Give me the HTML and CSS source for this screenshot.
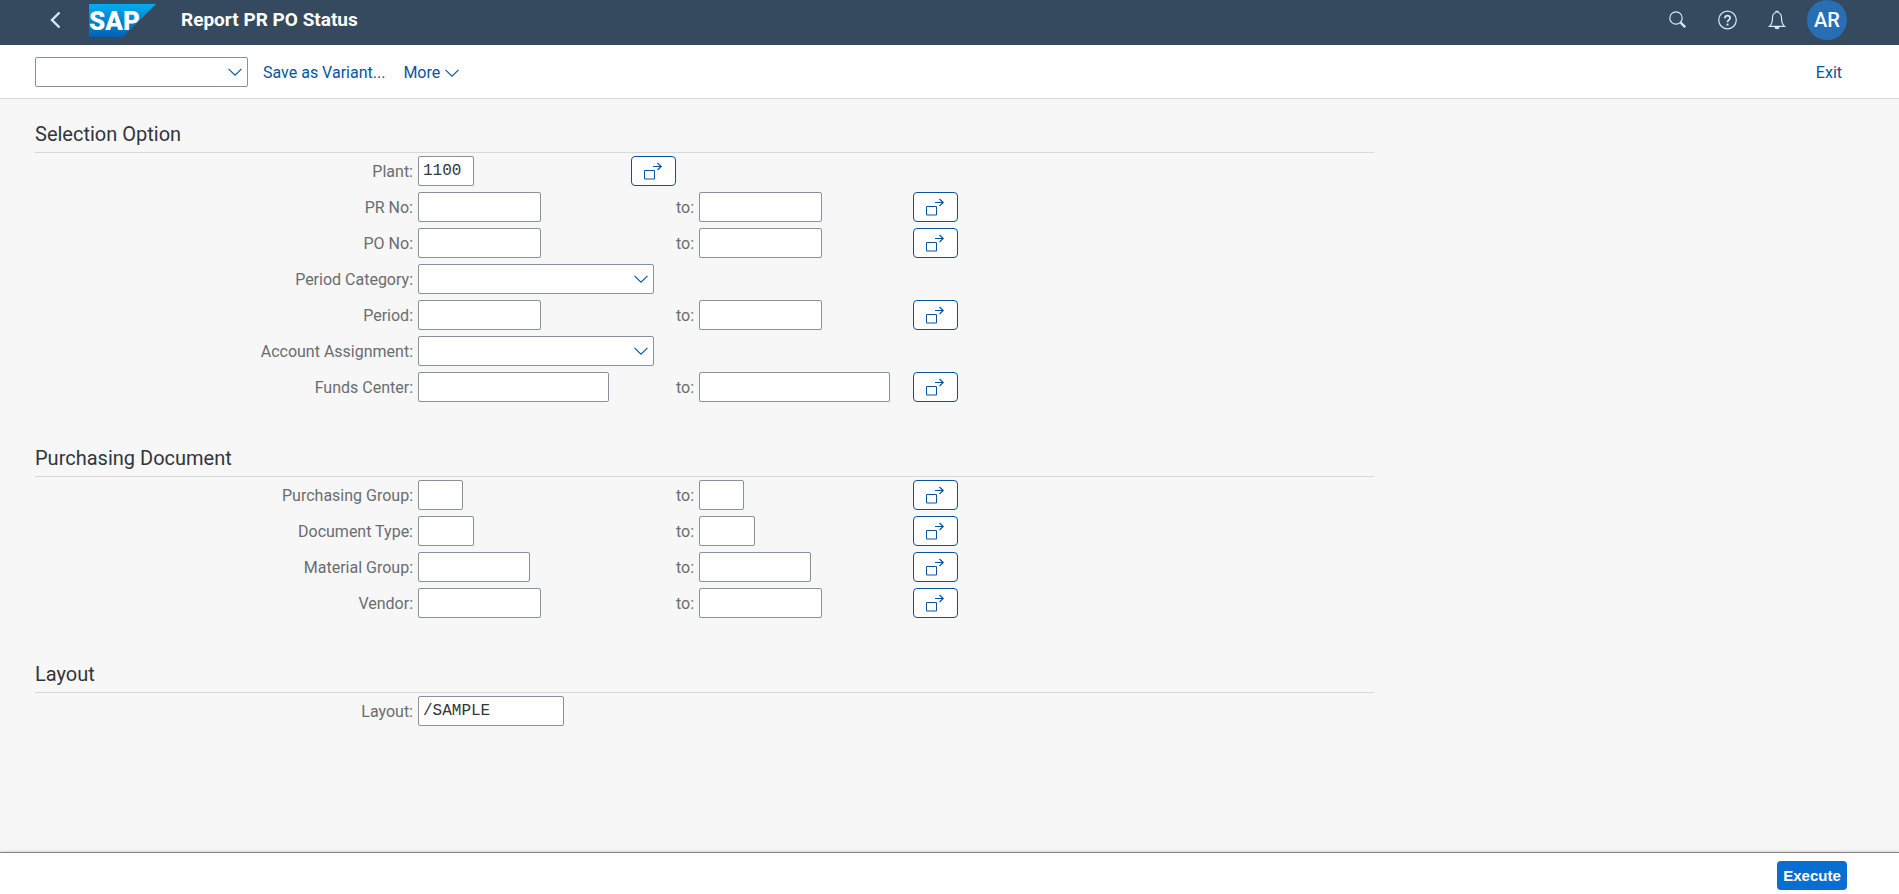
FILE: index.html
```html
<!DOCTYPE html>
<html lang="en">
<head>
<meta charset="utf-8">
<title>Report PR PO Status</title>
<link rel="stylesheet" href="styles.css">
</head>
<body>
<svg class="sprite" aria-hidden="true">
  <symbol id="chevron" viewBox="0 0 14 8"><path d="M.5.8 7 7.200 13.500.8" fill="none" stroke="currentColor" stroke-width="1.100"/></symbol>
  <symbol id="select-more" viewBox="0 0 19 18">
    <path d="M.5 8.500h10v8.500H.5z" fill="none" stroke="currentColor"/>
    <path d="M9 4.500h8.500M13.500 1l3.700 3.500L13.500 8" fill="none" stroke="currentColor" stroke-width="1.200"/>
  </symbol>
</svg>

<header class="shell">
  <button class="shell-button back" aria-label="Back"><svg width="11" height="18" viewBox="0 0 11 18"><path d="M9.500 1.500 2 9l7.500 7.500" fill="none" stroke="currentColor" stroke-width="2.400"/></svg></button>
  <a class="logo" href="#" aria-label="SAP home">
    <svg width="67" height="33" viewBox="0 0 67 33">
      <defs><linearGradient id="sap" x1="0" y1="0" x2="0" y2="1"><stop offset="0" stop-color="#00aeef"/><stop offset=".5" stop-color="#0083cf"/><stop offset="1" stop-color="#0062b4"/></linearGradient></defs>
      <path d="M0 0h67L34 33H0z" fill="url(#sap)"/>
      <text class="logo-text" x="0" y="26">SAP</text>
    </svg>
  </a>
  <h1 class="shell-title">Report PR PO Status</h1>
  <div class="shell-actions">
    <button class="shell-button" aria-label="Search"><svg width="18" height="18" viewBox="0 0 18 18" fill="none" stroke="currentColor"><circle cx="8" cy="7" r="6.200" stroke-width="1.200"/><path d="m12.500 11.500 4.700 4.700" stroke-width="2.400"/></svg></button>
    <button class="shell-button" aria-label="Help"><svg width="20" height="20" viewBox="0 0 20 20" fill="none" stroke="currentColor"><circle cx="10.500" cy="10" r="8.800" stroke-width="1.200"/><path d="M7.900 8.200c0-3.500 5.200-3.300 5.200-.3 0 1.900-2.600 2-2.600 4.300" stroke-width="1.800"/><path d="M10.500 13.600v2" stroke-width="2"/></svg></button>
    <button class="shell-button" aria-label="Notifications"><svg width="18" height="20" viewBox="0 0 18 20" fill="none" stroke="currentColor"><path d="M1.500 16.400h15c-2.500-2-3-4-3-8.400 0-3-1.500-5-3.500-5.500V1.300H8v1.200C6 3 4.500 5 4.500 8c0 4.400-.5 6.400-3 8.400z" stroke-width="1.200"/><path d="M6.500 17h5a2.500 2.300 0 0 1-5 0z" fill="currentColor" stroke="none"/></svg></button>
    <button class="avatar" aria-label="User menu">AR</button>
  </div>
</header>

<nav class="toolbar">
  <div class="combo combo-variant"><select class="field" aria-label="Variant"><option></option></select><svg class="chevron"><use href="#chevron"/></svg></div>
  <button class="link-button">Save as Variant...</button>
  <button class="link-button more">More <svg class="chevron"><use href="#chevron"/></svg></button>
  <button class="link-button exit">Exit</button>
</nav>

<main class="content">
  <section class="group">
    <h2 class="group-title">Selection Option</h2>
    <div class="rows">
      <div class="row"><label for="plant">Plant:</label><div class="single"><input class="field w-4" id="plant" value="1100"><button class="multi" aria-label="Multiple selection for Plant"><svg><use href="#select-more"/></svg></button></div></div>
      <div class="row"><label for="pr">PR No:</label><input class="field w-10" id="pr"><label for="pr-to">to:</label><input class="field w-10" id="pr-to"><button class="multi" aria-label="Multiple selection for PR No"><svg><use href="#select-more"/></svg></button></div>
      <div class="row"><label for="po">PO No:</label><input class="field w-10" id="po"><label for="po-to">to:</label><input class="field w-10" id="po-to"><button class="multi" aria-label="Multiple selection for PO No"><svg><use href="#select-more"/></svg></button></div>
      <div class="row"><label for="category">Period Category:</label><div class="combo combo-form"><select class="field" id="category"><option></option></select><svg class="chevron"><use href="#chevron"/></svg></div></div>
      <div class="row"><label for="period">Period:</label><input class="field w-10" id="period"><label for="period-to">to:</label><input class="field w-10" id="period-to"><button class="multi" aria-label="Multiple selection for Period"><svg><use href="#select-more"/></svg></button></div>
      <div class="row"><label for="account">Account Assignment:</label><div class="combo combo-form"><select class="field" id="account"><option></option></select><svg class="chevron"><use href="#chevron"/></svg></div></div>
      <div class="row"><label for="funds">Funds Center:</label><input class="field w-16" id="funds"><label for="funds-to">to:</label><input class="field w-16" id="funds-to"><button class="multi" aria-label="Multiple selection for Funds Center"><svg><use href="#select-more"/></svg></button></div>
    </div>
  </section>

  <section class="group">
    <h2 class="group-title">Purchasing Document</h2>
    <div class="rows">
      <div class="row"><label for="pgroup">Purchasing Group:</label><input class="field w-3" id="pgroup"><label for="pgroup-to">to:</label><input class="field w-3" id="pgroup-to"><button class="multi" aria-label="Multiple selection for Purchasing Group"><svg><use href="#select-more"/></svg></button></div>
      <div class="row"><label for="dtype">Document Type:</label><input class="field w-4" id="dtype"><label for="dtype-to">to:</label><input class="field w-4" id="dtype-to"><button class="multi" aria-label="Multiple selection for Document Type"><svg><use href="#select-more"/></svg></button></div>
      <div class="row"><label for="mgroup">Material Group:</label><input class="field w-9" id="mgroup"><label for="mgroup-to">to:</label><input class="field w-9" id="mgroup-to"><button class="multi" aria-label="Multiple selection for Material Group"><svg><use href="#select-more"/></svg></button></div>
      <div class="row"><label for="vendor">Vendor:</label><input class="field w-10" id="vendor"><label for="vendor-to">to:</label><input class="field w-10" id="vendor-to"><button class="multi" aria-label="Multiple selection for Vendor"><svg><use href="#select-more"/></svg></button></div>
    </div>
  </section>

  <section class="group">
    <h2 class="group-title">Layout</h2>
    <div class="rows">
      <div class="row"><label for="layout">Layout:</label><input class="field w-12" id="layout" value="/SAMPLE"></div>
    </div>
  </section>
</main>

<footer class="footer"><button class="execute">Execute</button></footer>
</body>
</html>
```

FILE: styles.css
```css
* { box-sizing: border-box; }

body {
  margin: 0;
  min-height: 100vh;
  display: flex;
  flex-direction: column;
  background: #f7f7f7;
  color: #32363a;
  font: 16px/20px Roboto, "Liberation Sans", sans-serif;
}

button, input, select { font: inherit; margin: 0; }
button { cursor: pointer; padding: 0; }

.sprite { display: none; }

/* Shell bar */
.shell {
  display: flex;
  align-items: flex-start;
  height: 45px;
  padding: 0 52px 0 35px;
  background: #354a5f;
}

.shell-button {
  display: flex;
  align-items: center;
  justify-content: center;
  width: 40px;
  height: 40px;
  border: 0;
  background: none;
  color: #d1e8ff;
}

.logo { display: block; height: 40px; padding-top: 4px; margin-left: 14px; }
.logo svg { display: block; }
.logo-text { font: 900 26px Roboto, sans-serif; fill: #fff; }

.shell-title {
  margin: 0 0 0 25px;
  color: #fff;
  font-size: 19px;
  font-weight: 700;
  line-height: 40px;
}

.shell-actions { display: flex; gap: 10px; margin-left: auto; }

.avatar {
  width: 40px;
  height: 40px;
  border: 0;
  border-radius: 50%;
  background: #286eb4;
  color: #fff;
  font-size: 20px;
  font-weight: 500;
}

/* Toolbar */
.toolbar {
  display: flex;
  align-items: center;
  height: 54px;
  padding: 1px 57px 0 35px;
  background: #fff;
  border-bottom: 1px solid #d9d9d9;
}

.link-button {
  display: flex;
  align-items: center;
  gap: 5px;
  padding-top: 2px;
  border: 0;
  background: none;
  color: #0854a0;
  margin-left: 15px;
}
.more { margin-left: 18px; }
.exit { margin-left: auto; }

.chevron { width: 14px; height: 8px; color: #0854a0; }

/* Fields */
.field {
  height: 30px;
  padding: 0 4px;
  border: 1px solid #89919a;
  border-radius: 2px;
  background: #fff;
  color: #32363a;
  font-family: "Liberation Mono", monospace;
}

.w-3 { width: 45px; }
.w-4 { width: 56px; }
.w-9 { width: 112px; }
.w-10 { width: 123px; }
.w-12 { width: 146px; }
.w-16 { width: 191px; }

.combo { display: grid; align-items: center; }
.combo > * { grid-area: 1 / 1; }
.combo select { width: 100%; appearance: none; }
.combo .chevron { justify-self: end; margin-right: 6px; pointer-events: none; }
.combo-variant { width: 213px; }
.combo-form { width: 236px; }

/* Form */
.content { flex: 1; padding: 17px 35px 0; }

.group { max-width: 1339px; margin-bottom: 38px; }

.group-title {
  margin: 0;
  border-bottom: 1px solid #d9d9d9;
  font-size: 20px;
  font-weight: 400;
  line-height: 36px;
}

.rows { display: grid; gap: 6px; padding-top: 3px; }

.row {
  display: grid;
  grid-template-columns: 378px 246px 25px 209px 45px;
  column-gap: 5px;
  align-items: center;
}

.row label {
  padding-top: 2px;
  color: #6a6d70;
  text-align: right;
  white-space: nowrap;
}

.single {
  grid-column: 2 / 4;
  display: flex;
  justify-content: space-between;
  width: 258px;
}

.multi {
  display: flex;
  align-items: center;
  justify-content: center;
  width: 45px;
  height: 30px;
  border: 1px solid #0854a0;
  border-radius: 4px;
  background: #fff;
  color: #0854a0;
}
.multi svg { width: 19px; height: 18px; }

/* Footer */
.footer {
  display: flex;
  justify-content: flex-end;
  height: 42px;
  padding: 8px 52px 0;
  background: #fff;
  border-top: 1px solid #808284;
  box-shadow: 0 -1px 3px rgba(0, 0, 0, .12);
}

.execute {
  width: 70px;
  height: 29px;
  border: 0;
  border-radius: 4px;
  background: #0a6ed1;
  color: #fff;
  font-family: "Liberation Sans", sans-serif;
  font-size: 15px;
  font-weight: 700;
}
```
